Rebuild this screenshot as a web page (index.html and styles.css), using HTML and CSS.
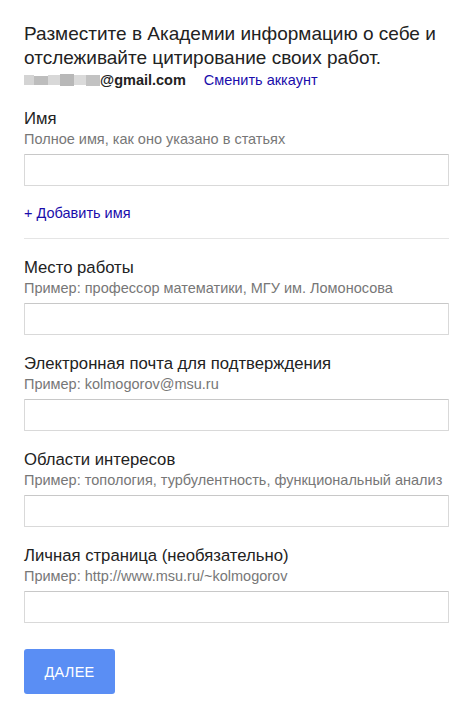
FILE: index.html
```html
<!DOCTYPE html>
<html lang="ru">
<head>
<meta charset="utf-8">
<title>Профиль</title>
<link rel="stylesheet" href="styles.css">
</head>
<body>
<div class="page">
  <h1 class="title">Разместите в Академии информацию о себе и отслеживайте цитирование своих работ.</h1>
  <div class="account">
    <span class="blur" aria-hidden="true"><i class="b1"></i><i class="b2"></i><i class="b3"></i><i class="b4"></i><i class="b5"></i><i class="b6"></i></span><span class="email">@gmail.com</span>
    <a class="link switch" href="#">Сменить аккаунт</a>
  </div>

  <div class="field first">
    <div class="label">Имя</div>
    <div class="hint">Полное имя, как оно указано в статьях</div>
    <input class="input" type="text">
  </div>
  <a class="link add" href="#">+ Добавить имя</a>
  <div class="divider"></div>

  <div class="field">
    <div class="label">Место работы</div>
    <div class="hint">Пример: профессор математики, МГУ им. Ломоносова</div>
    <input class="input" type="text">
  </div>
  <div class="field">
    <div class="label">Электронная почта для подтверждения</div>
    <div class="hint">Пример: kolmogorov@msu.ru</div>
    <input class="input" type="text">
  </div>
  <div class="field">
    <div class="label">Области интересов</div>
    <div class="hint">Пример: топология, турбулентность, функциональный анализ</div>
    <input class="input" type="text">
  </div>
  <div class="field">
    <div class="label">Личная страница (необязательно)</div>
    <div class="hint">Пример: http://www.msu.ru/~kolmogorov</div>
    <input class="input" type="text">
  </div>

  <button class="next" type="button">ДАЛЕЕ</button>
</div>
</body>
</html>
```

FILE: styles.css
```css
* { box-sizing: border-box; }
html, body { margin: 0; padding: 0; background: #fff; }
body {
  font-family: "Liberation Sans", Arial, sans-serif;
  color: #222;
}
.page {
  padding: 22px 25px 0 24px;
  width: 474px;
}
.title {
  margin: 0;
  font-size: 19px;
  line-height: 24px;
  font-weight: normal;
  color: #222;
}
.account {
  display: flex;
  align-items: center;
  margin-top: 1px;
  height: 18px;
  font-size: 14.5px;
  line-height: 18px;
}
.blur {
  display: inline-flex;
  align-items: center;
  width: 76px;
  height: 14px;
}
.blur i {
  display: block;
  height: 10px;
  background: #c9c9c9;
}
.blur .b1 { width: 10px; background: #d4d4d4; }
.blur .b2 { width: 14px; background: #bdbdbd; height: 9px; }
.blur .b3 { width: 12px; background: #d8d8d8; }
.blur .b4 { width: 14px; background: #b8b8b8; height: 12px; }
.blur .b5 { width: 12px; background: #dadada; }
.blur .b6 { width: 14px; background: #c2c2c2; height: 11px; }
.email {
  font-weight: bold;
  color: #222;
}
.link {
  color: #1a0dab;
  text-decoration: none;
}
.switch {
  margin-left: 18px;
}
.field {
  display: flex;
  flex-direction: column;
  margin-top: 19px;
}
.field.first { margin-top: 20px; }
.label {
  font-size: 16.7px;
  line-height: 20px;
  color: #222;
}
.hint {
  margin-top: 1px;
  font-size: 14.5px;
  line-height: 18px;
  color: #777;
}
.input {
  margin-top: 6px;
  width: 100%;
  height: 32px;
  border: 1px solid #d9d9d9;
  border-top-color: #c8c8c8;
  border-radius: 1px;
  background: #fff;
  padding: 0 8px;
  font: inherit;
}
.add {
  display: block;
  margin-top: 18px;
  font-size: 14.5px;
  line-height: 18px;
}
.divider {
  margin-top: 16px;
  height: 1px;
  background: #e5e5e5;
}
.divider + .field { margin-top: 19px; }
.next {
  margin-top: 26px;
  width: 91px;
  height: 45px;
  border: none;
  border-radius: 3px;
  background: #5a8ef4;
  color: #fff;
  font-family: "Liberation Sans", Arial, sans-serif;
  font-size: 14.5px;
  letter-spacing: 0.3px;
}
```
